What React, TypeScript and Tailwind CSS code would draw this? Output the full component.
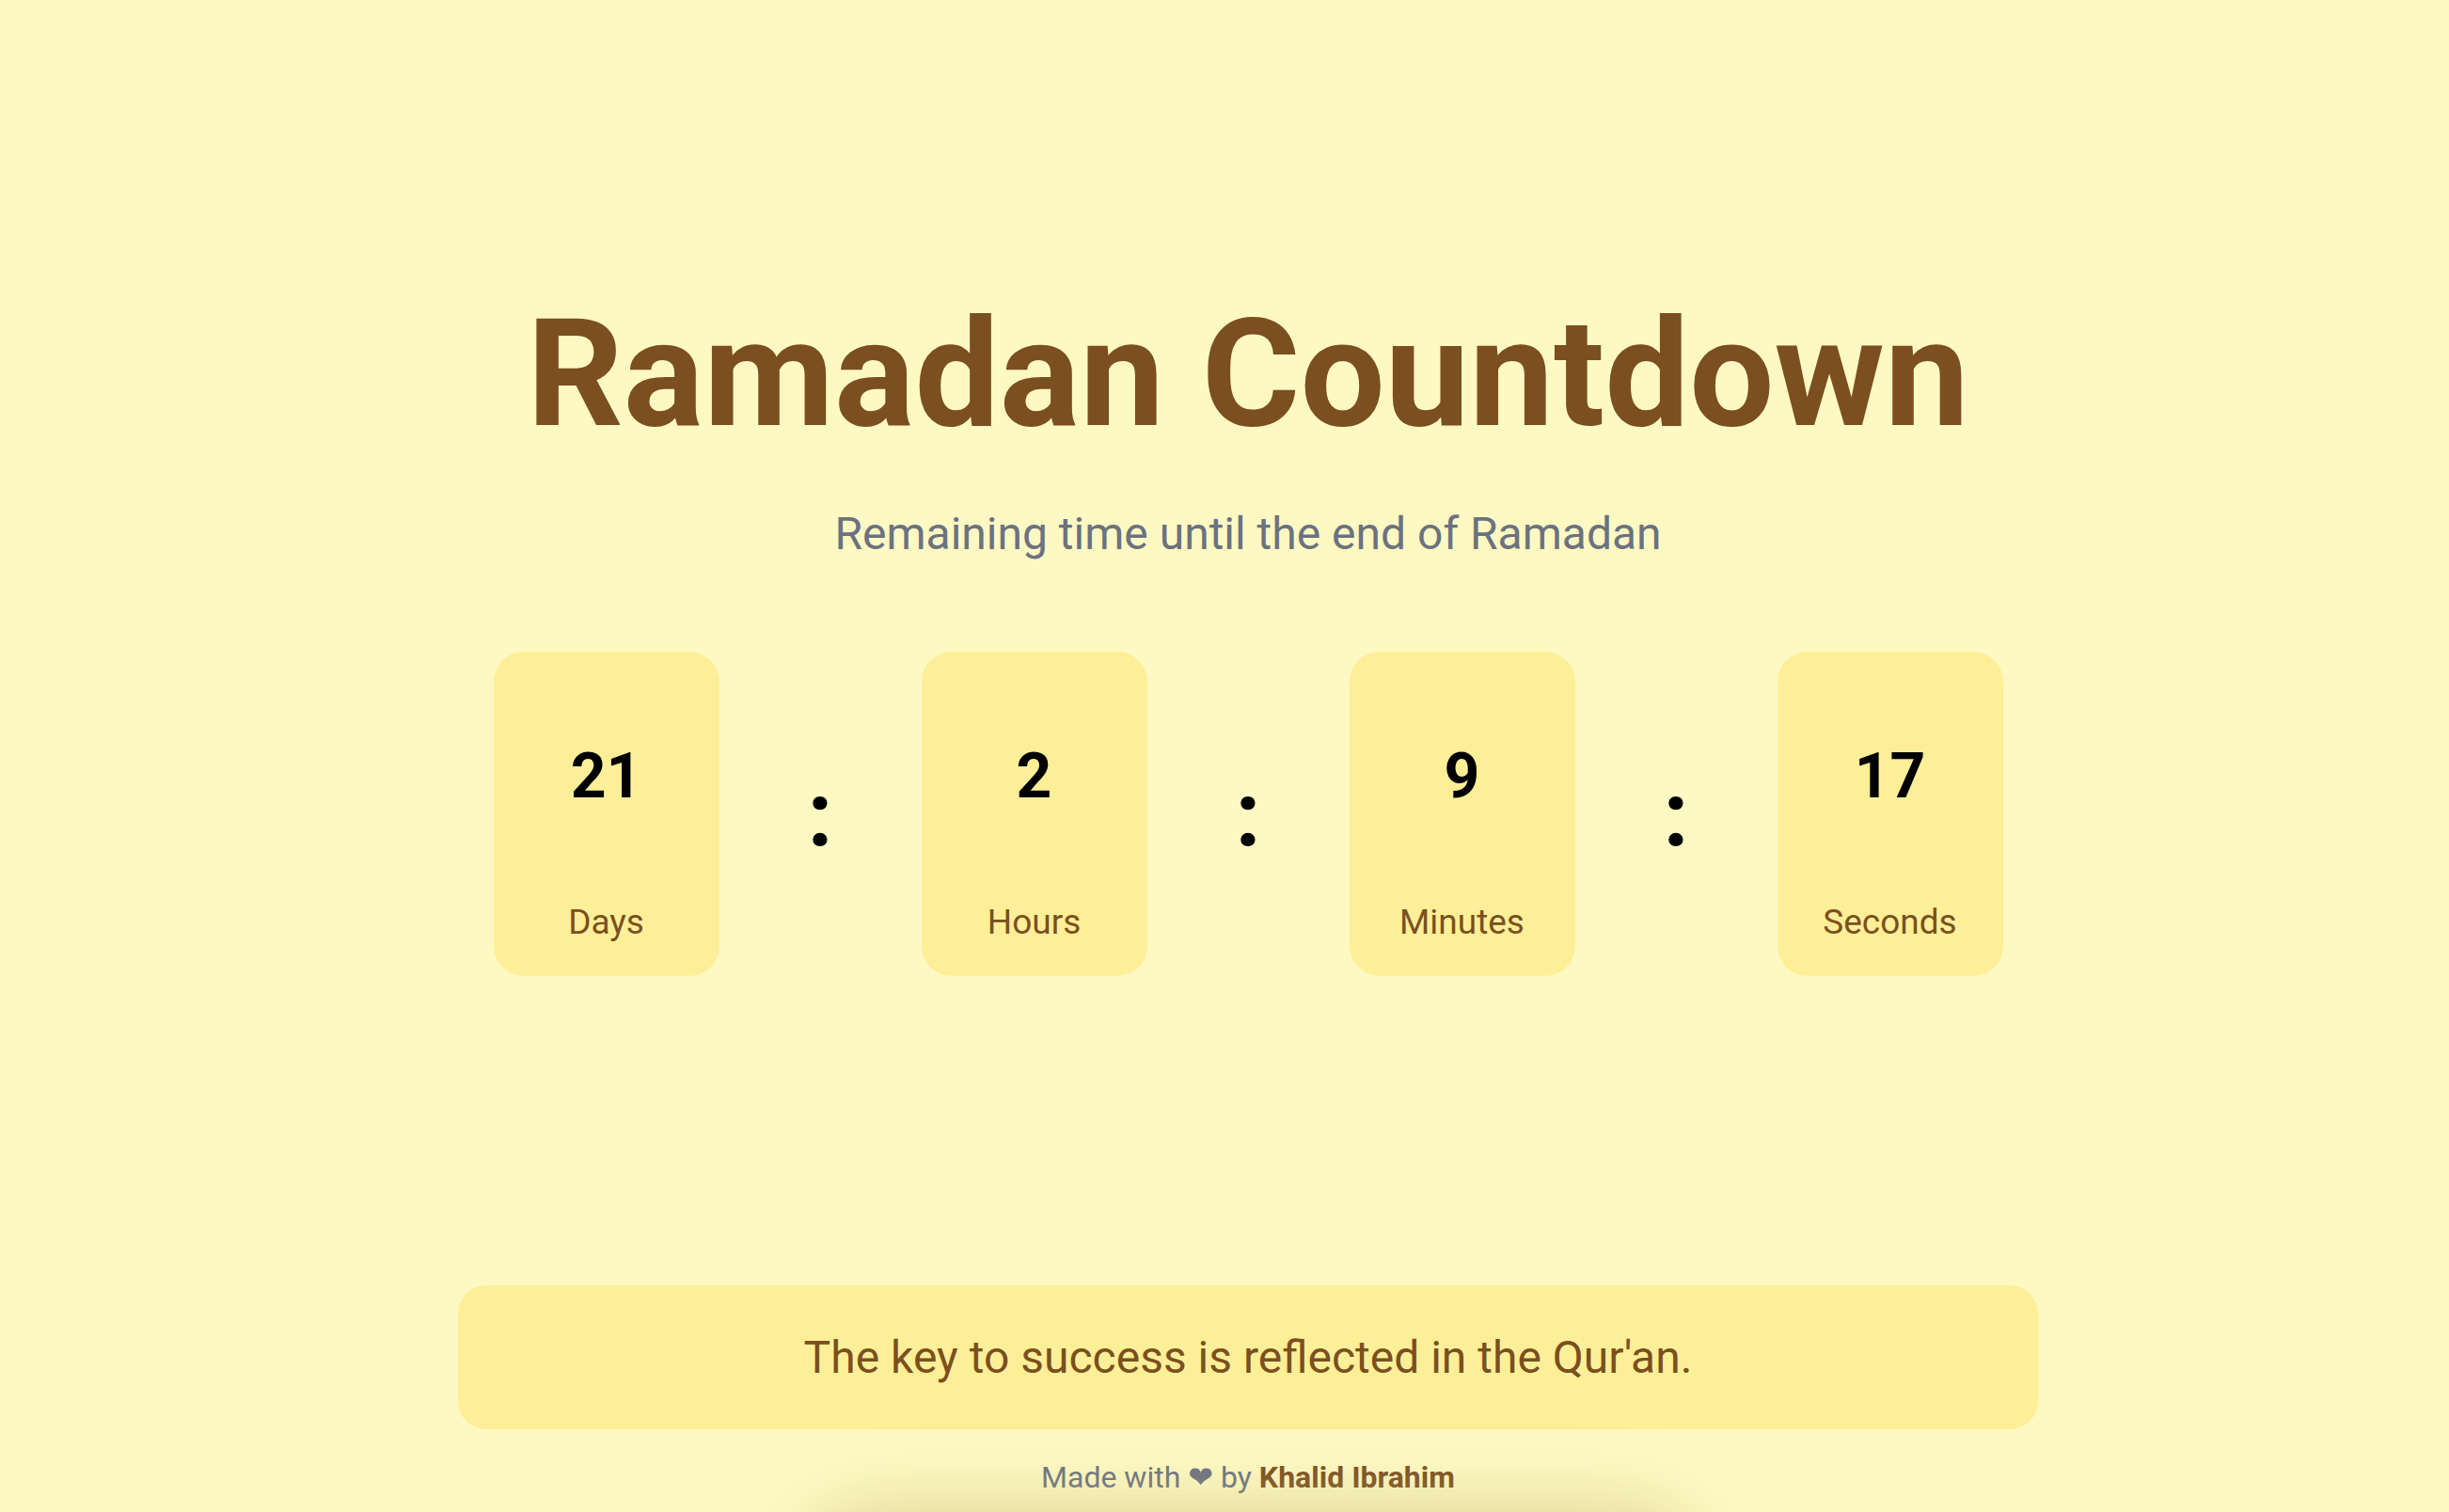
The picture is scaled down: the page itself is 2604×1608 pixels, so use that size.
import React from "react";

const units = [
  { value: 21, label: "Days" },
  { value: 2, label: "Hours" },
  { value: 9, label: "Minutes" },
  { value: 17, label: "Seconds" },
];

export default function App() {
  return (
    <div
      className="relative h-[1608px] w-full overflow-hidden bg-[#fef9c3]"
      style={{ fontFamily: "Roboto, 'Noto Sans', sans-serif" }}
    >
      <div className="flex w-full flex-col items-center pl-[50px] pt-[318px]">
        <h1 className="text-[160px] font-bold leading-none text-[#7b4f20]">
          Ramadan Countdown
        </h1>
        <p className="mt-[66px] text-[48px] leading-none text-[#6b7280]">
          Remaining time until the end of Ramadan
        </p>

        <div className="mt-[101px] flex items-center">
          {units.map((u, i) => (
            <React.Fragment key={u.label}>
              {i > 0 && (
                <div className="w-[215px] text-center text-[96px] font-bold leading-none text-black">
                  :
                </div>
              )}
              <div className="flex h-[345px] w-[240px] flex-col items-center rounded-[32px] bg-[#fdef97] pt-[100px]">
                <div className="text-[66px] font-bold leading-none text-black">
                  {u.value}
                </div>
                <div className="mt-[103px] text-[37px] leading-none text-[#7b4f20]">
                  {u.label}
                </div>
              </div>
            </React.Fragment>
          ))}
        </div>

        <div className="mt-[329px] flex h-[153px] w-[1680px] items-center justify-center rounded-[30px] bg-[#fdef97]">
          <p className="text-[48px] leading-none text-[#7b4f20]">
            The key to success is reflected in the Qur'an.
          </p>
        </div>

        <footer className="mt-[35px] text-[32px] leading-none text-[#6b7280]">
          Made with <span style={{ fontFamily: "'DejaVu Sans', sans-serif" }}>❤</span> by{" "}
          <span className="font-bold text-[#7b4f20]">Khalid Ibrahim</span>
        </footer>
      </div>

      <div className="pointer-events-none absolute left-[880px] top-[1640px] h-[120px] w-[900px] rounded-full bg-[#e6dfae] shadow-[0_0_70px_40px_rgba(200,190,120,0.55)]" />
    </div>
  );
}
